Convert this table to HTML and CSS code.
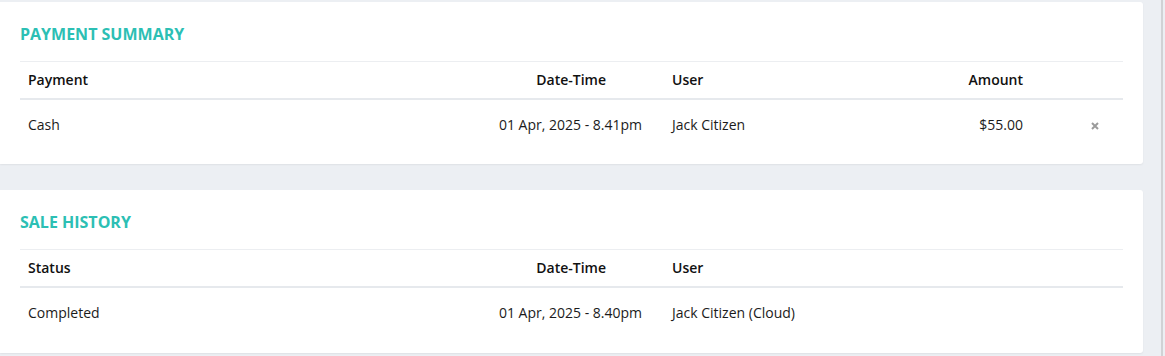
FILE: index.html
```html
<!DOCTYPE html>
<html lang="en">
<head>
    <meta charset="UTF-8">
    <meta name="viewport" content="width=device-width, initial-scale=1.0">
    <title>Sale Details</title>
    <link rel="stylesheet" href="styles.css">
</head>
<body>

    <div class="content">

        <!-- Payments taken on this sale -->
        <section class="card">
            <h3 class="card-title">Payment Summary</h3>
            <table class="data-table">
                <colgroup>
                    <col class="col-first">
                    <col class="col-date">
                    <col class="col-user">
                    <col class="col-amount">
                    <col class="col-action">
                </colgroup>
                <thead>
                    <tr>
                        <th>Payment</th>
                        <th class="cell-date">Date-Time</th>
                        <th>User</th>
                        <th class="cell-amount">Amount</th>
                        <th></th>
                    </tr>
                </thead>
                <tbody>
                    <tr>
                        <td>Cash</td>
                        <td class="cell-date">01 Apr, 2025 - 8.41pm</td>
                        <td>Jack Citizen</td>
                        <td class="cell-amount">$55.00</td>
                        <td class="cell-action">
                            <svg class="remove-icon" width="8" height="8" viewBox="0 0 8 8">
                                <path d="M1 1 L7 7 M7 1 L1 7" />
                            </svg>
                        </td>
                    </tr>
                </tbody>
            </table>
        </section>

        <!-- Status changes of the sale -->
        <section class="card card-last">
            <h3 class="card-title">Sale History</h3>
            <table class="data-table">
                <colgroup>
                    <col class="col-first">
                    <col class="col-date">
                    <col>
                </colgroup>
                <thead>
                    <tr>
                        <th>Status</th>
                        <th class="cell-date">Date-Time</th>
                        <th>User</th>
                    </tr>
                </thead>
                <tbody>
                    <tr>
                        <td>Completed</td>
                        <td class="cell-date">01 Apr, 2025 - 8.40pm</td>
                        <td>Jack Citizen (Cloud)</td>
                    </tr>
                </tbody>
            </table>
        </section>

    </div>

</body>
</html>
```

FILE: styles.css
```css
html, body {
    margin: 0;
    height: 100%;
}

body {
    background-color: #eceff3;
    font-family: "Open Sans", "Liberation Sans", sans-serif;
    color: #1b1b1b;
    overflow: hidden;
}

.content {
    width: 1163px;
    height: 100%;
    box-sizing: border-box;
    border-right: 2px solid #d0d2d5;
    padding-top: 2px;
    display: flex;
    flex-direction: column;
    gap: 26px;
}

.card {
    width: 1143px;
    box-sizing: border-box;
    background-color: #fff;
    border-radius: 0 3px 3px 0;
    box-shadow: 0 1px 2px rgba(0, 0, 0, 0.06);
    padding: 21px 20px 14px;
}

.card-last {
    padding-bottom: 15px;
}

.card-title {
    margin: 0 0 16px;
    font-size: 16px;
    line-height: 22px;
    font-weight: 700;
    text-transform: uppercase;
    color: #2cbfb4;
}

.data-table {
    width: 100%;
    table-layout: fixed;
    border-collapse: collapse;
    font-size: 14px;
    line-height: 20px;
}

.col-first { width: 394px; }
.col-date { width: 250px; }
.col-user { width: 167px; }
.col-amount { width: 200px; }
.col-action { width: 92px; }

.data-table th,
.data-table td {
    padding: 0 8px;
    text-align: left;
    white-space: nowrap;
}

.data-table th {
    height: 36px;
    font-weight: 600;
    color: #111;
    border-top: 1px solid #eceef1;
    border-bottom: 2px solid #e6e9ed;
}

.data-table td {
    height: 50px;
}

/* header label sits further in than the value below it */
.data-table th.cell-date {
    text-align: right;
    padding-right: 58px;
}

.data-table td.cell-date {
    text-align: right;
    padding-right: 22px;
}

.data-table .cell-amount {
    text-align: right;
}

.data-table .cell-action {
    text-align: right;
    padding-right: 24px;
}

.remove-icon {
    display: inline-block;
    vertical-align: middle;
}

.remove-icon path {
    stroke: #9b9b9b;
    stroke-width: 2;
    fill: none;
}
```
